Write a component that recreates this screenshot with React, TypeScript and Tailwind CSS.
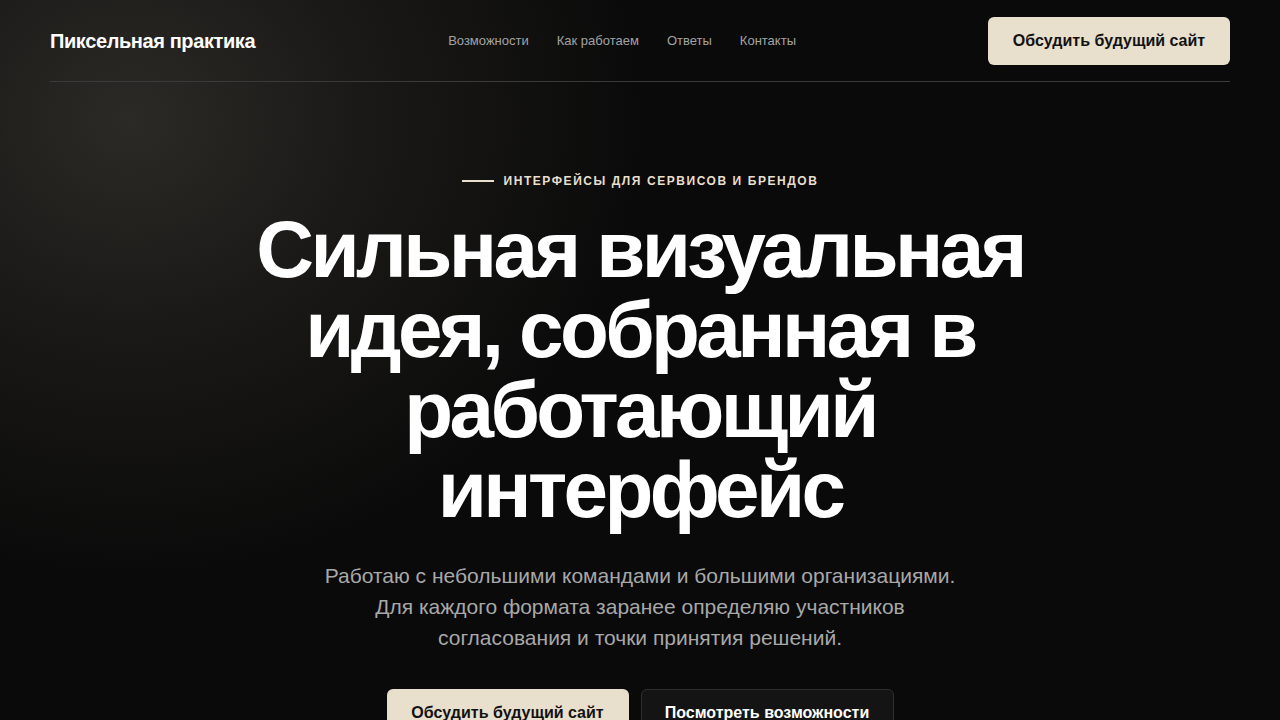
import React from "react";

export default function App() {
  const font = { fontFamily: '"Liberation Sans", Arial, sans-serif' };
  return (
    <div
      style={font}
      className="min-h-[720px] w-full bg-[#0a0a0a] bg-[radial-gradient(ellipse_520px_460px_at_130px_120px,#2c2a26_0%,#1a1917_45%,#0a0a0a_100%)] text-white"
    >
      <div className="mx-auto w-[1180px]">
        <header className="flex h-[82px] items-center border-b border-[#3a3a3a]">
          <div className="text-[20px] font-bold tracking-[-0.02em] text-white">Пиксельная практика</div>
          <nav className="ml-[193px] flex items-center gap-[28px] text-[13px] text-[#a3a3a3]">
            <a>Возможности</a>
            <a>Как работаем</a>
            <a>Ответы</a>
            <a>Контакты</a>
          </nav>
          <button className="ml-auto flex h-[48px] w-[242px] items-center justify-center rounded-md bg-[#e8dfcc] text-[16px] font-bold text-[#121212]">
            Обсудить будущий сайт
          </button>
        </header>

        <main className="flex flex-col items-center pt-[90px] text-center">
          <div className="flex items-center gap-[10px]">
            <span className="h-[2px] w-[32px] bg-[#e8dfcc]" />
            <span className="text-[12px] font-bold tracking-[0.13em] text-[#e8dfcc]">
              ИНТЕРФЕЙСЫ ДЛЯ СЕРВИСОВ И БРЕНДОВ
            </span>
          </div>
          <h1 className="mt-[20px] max-w-[820px] text-[80px] font-bold leading-[80px] tracking-[-0.045em] text-white">
            Сильная визуальная идея, собранная в работающий интерфейс
          </h1>
          <p className="mt-[30px] max-w-[640px] text-[21px] leading-[31px] text-[#a8a8a8]">
            Работаю с небольшими командами и большими организациями. Для каждого формата заранее определяю участников согласования и точки принятия решений.
          </p>
          <div className="mt-[36px] flex gap-[12px]">
            <button className="flex h-[48px] w-[242px] items-center justify-center rounded-md bg-[#e8dfcc] text-[16px] font-bold text-[#121212]">
              Обсудить будущий сайт
            </button>
            <button className="flex h-[48px] w-[253px] items-center justify-center rounded-md border border-[#2e2e2e] bg-[#141414] text-[16px] font-bold text-white">
              Посмотреть возможности
            </button>
          </div>
        </main>
      </div>
    </div>
  );
}
